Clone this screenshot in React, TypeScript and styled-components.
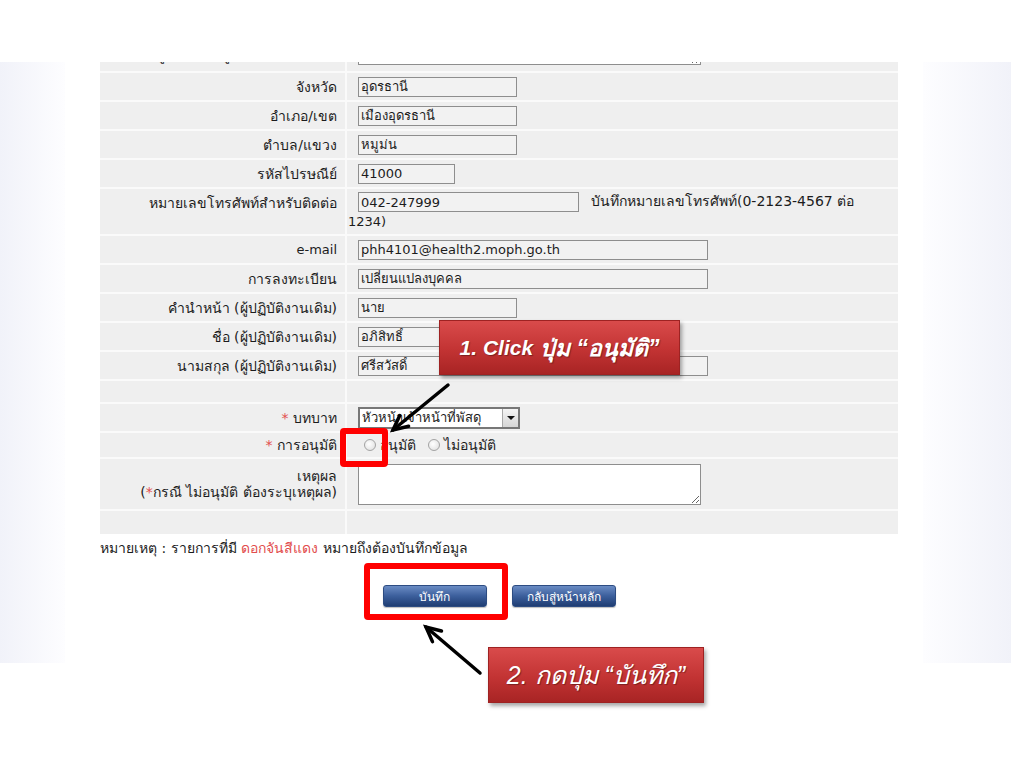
import React from "react";
import styled, { createGlobalStyle } from "styled-components";

const GlobalStyle = createGlobalStyle`
  html, body {
    margin: 0;
    padding: 0;
    background: #ffffff;
  }
  body {
    font-family: Tahoma, "DejaVu Sans", sans-serif;
  }
`;

const Page = styled.div`
  position: relative;
  width: 1024px;
  height: 768px;
  overflow: hidden;
  background: #ffffff;
`;

const Shot = styled.div`
  display: flex;
  margin-top: 62px;
  height: 601px;
`;

const Strip = styled.div<{ $side: "left" | "right" }>`
  width: ${(p) => (p.$side === "left" ? 65 : 88)}px;
  margin-left: ${(p) => (p.$side === "left" ? 0 : 25)}px;
  background: linear-gradient(
    to ${(p) => (p.$side === "left" ? "right" : "left")},
    #f1f2f9,
    #fdfdff
  );
`;

const Main = styled.div`
  width: 798px;
  margin-left: 35px;
  display: flex;
  flex-direction: column;
`;

const Table = styled.div`
  display: flex;
  flex-direction: column;
  gap: 2px;
  background: #fafafa;
`;

const Row = styled.div<{ $h: number }>`
  display: grid;
  grid-template-columns: 245px 1fr;
  column-gap: 2px;
  height: ${(p) => p.$h}px;
  overflow: hidden;
`;

const Label = styled.div<{ $top?: boolean; $latin?: boolean }>`
  background: #efefef;
  display: flex;
  flex-direction: column;
  justify-content: ${(p) => (p.$top ? "flex-start" : "center")};
  align-items: flex-end;
  padding: ${(p) => (p.$top ? "6px 8px 0 0" : "0 8px 0 0")};
  overflow: hidden;
  font-size: ${(p) => (p.$latin ? 13 : 14)}px;
  line-height: 16px;
  color: #1c1c1c;
  text-align: right;
  white-space: nowrap;
`;

const Value = styled.div<{ $flow?: boolean }>`
  background: #efefef;
  display: ${(p) => (p.$flow ? "block" : "flex")};
  align-items: center;
  padding: ${(p) => (p.$flow ? "3px 0 0 1px" : "0 0 0 1px")};
  overflow: hidden;
  font-size: 13px;
  line-height: 19px;
  color: #1c1c1c;
`;

const Cut = styled.div<{ $shift: number }>`
  margin-top: ${(p) => p.$shift}px;
`;

const Star = styled.span`
  color: #e24d4d;
`;

const Field = styled.input<{ $w: number }>`
  box-sizing: border-box;
  width: ${(p) => p.$w}px;
  height: 20px;
  margin: 0 0 0 10px;
  padding: 0 2px;
  border: 1px solid #8e8e8e;
  background: #f2f2f2;
  font-family: Tahoma, "DejaVu Sans", sans-serif;
  font-size: 13px;
  color: #1c1c1c;
  outline: none;
  vertical-align: top;
`;

const Hint = styled.span`
  margin-left: 12px;
  font-size: 14px;
  color: #1c1c1c;
`;

const Area = styled.textarea<{ $h: number }>`
  box-sizing: border-box;
  width: 343px;
  height: ${(p) => p.$h}px;
  margin: 0 0 0 10px;
  border: 1px solid #8e8e8e;
  background: #ffffff;
  outline: none;
  font-family: inherit;
`;

const SelectBox = styled.div`
  box-sizing: border-box;
  display: flex;
  align-items: center;
  width: 162px;
  height: 22px;
  margin-left: 10px;
  border: 2px solid #777777;
  background: #ffffff;
`;

const SelectText = styled.span`
  flex: 1;
  padding-left: 2px;
  font-size: 13px;
  color: #1c1c1c;
  white-space: nowrap;
  overflow: hidden;
`;

const DropButton = styled.span`
  box-sizing: border-box;
  width: 16px;
  height: 18px;
  border-left: 1px solid #a9a9a9;
  background: linear-gradient(#f4f4f4, #d6d6d6);
  display: flex;
  align-items: center;
  justify-content: center;
  &::after {
    content: "";
    border-left: 4px solid transparent;
    border-right: 4px solid transparent;
    border-top: 4px solid #111111;
  }
`;

const RadioGroup = styled.div`
  display: flex;
  align-items: center;
  margin-left: 16px;
  gap: 4px;
`;

const Radio = styled.span`
  box-sizing: border-box;
  width: 12px;
  height: 12px;
  border-radius: 50%;
  border: 1px solid #a3a3a3;
  background: radial-gradient(circle at 40% 40%, #ffffff, #dcdcdc);
`;

const RadioText = styled.span`
  margin-right: 8px;
  font-size: 14px;
  color: #1c1c1c;
`;

const Note = styled.div`
  margin-top: 6px;
  font-size: 14px;
  line-height: 16px;
  color: #1c1c1c;
`;

const Red = styled.span`
  color: #e24d4d;
`;

const Buttons = styled.div`
  display: flex;
  justify-content: center;
  gap: 25px;
  margin-top: 29px;
`;

const Button = styled.button`
  box-sizing: border-box;
  width: 104px;
  height: 22px;
  padding: 0;
  border: 1px solid #2d4c82;
  border-radius: 3px;
  background: linear-gradient(#6a8cc4, #3c5f9c 50%, #1f3d73);
  color: #ffffff;
  font-family: Tahoma, "DejaVu Sans", sans-serif;
  font-size: 12px;
  box-shadow: 0 1px 1px rgba(0, 0, 0, 0.25);
`;

const Frame = styled.div<{ $x: number; $y: number; $w: number; $h: number }>`
  position: absolute;
  left: ${(p) => p.$x}px;
  top: ${(p) => p.$y}px;
  width: ${(p) => p.$w}px;
  height: ${(p) => p.$h}px;
  box-sizing: border-box;
  border: 6px solid #ff0000;
  border-radius: 4px;
`;

const Callout = styled.div<{ $x: number; $y: number; $w: number; $h: number; $size: number; $bold?: boolean }>`
  position: absolute;
  left: ${(p) => p.$x}px;
  top: ${(p) => p.$y}px;
  width: ${(p) => p.$w}px;
  height: ${(p) => p.$h}px;
  box-sizing: border-box;
  display: flex;
  align-items: center;
  justify-content: center;
  border: 1px solid #9e2222;
  background: linear-gradient(#d94b4b, #c23333 55%, #a82424);
  box-shadow: 2px 3px 4px rgba(0, 0, 0, 0.35);
  color: #ffffff;
  font-family: "Liberation Sans", Arial, sans-serif;
  font-style: italic;
  font-weight: ${(p) => (p.$bold ? 700 : 400)};
  font-size: ${(p) => p.$size}px;
  text-shadow: 1px 1px 1px rgba(0, 0, 0, 0.35);
  white-space: nowrap;
`;

const Lead = styled.span`
  margin-right: 7px;
  font-size: 21px;
`;

const Arrows = styled.svg`
  position: absolute;
  left: 0;
  top: 0;
  pointer-events: none;
`;

type Arrow = { x1: number; y1: number; x2: number; y2: number };

const arrows: Arrow[] = [
  { x1: 448, y1: 385, x2: 393, y2: 430 },
  { x1: 480, y1: 673, x2: 426, y2: 627 },
];

function arrowHead(a: Arrow) {
  const ang = Math.atan2(a.y2 - a.y1, a.x2 - a.x1);
  const len = 16;
  const spread = 0.45;
  const p1 = [a.x2 - len * Math.cos(ang - spread), a.y2 - len * Math.sin(ang - spread)];
  const p2 = [a.x2 - len * Math.cos(ang + spread), a.y2 - len * Math.sin(ang + spread)];
  return `M${p1[0]} ${p1[1]} L${a.x2} ${a.y2} L${p2[0]} ${p2[1]}`;
}

export default function App() {
  return (
    <Page>
      <GlobalStyle />
      <Shot>
        <Strip $side="left" />
        <Main>
          <Table>
            <Row $h={9}>
              <Label $top>
                <Cut $shift={-21}>ที่อยู่ (เลขที่/หมู่/ตรอก/ซอย/ถนน)</Cut>
              </Label>
              <Value>
                <Cut $shift={-30}>
                  <Area $h={32} readOnly />
                </Cut>
              </Value>
            </Row>
            <Row $h={27}>
              <Label>จังหวัด</Label>
              <Value>
                <Field $w={159} readOnly value="อุดรธานี" />
              </Value>
            </Row>
            <Row $h={27}>
              <Label>อำเภอ/เขต</Label>
              <Value>
                <Field $w={159} readOnly value="เมืองอุดรธานี" />
              </Value>
            </Row>
            <Row $h={27}>
              <Label>ตำบล/แขวง</Label>
              <Value>
                <Field $w={159} readOnly value="หมูม่น" />
              </Value>
            </Row>
            <Row $h={27}>
              <Label>รหัสไปรษณีย์</Label>
              <Value>
                <Field $w={97} readOnly value="41000" />
              </Value>
            </Row>
            <Row $h={45}>
              <Label $top>หมายเลขโทรศัพท์สำหรับติดต่อ</Label>
              <Value $flow>
                <Field $w={221} readOnly value="042-247999" />
                <Hint>บันทึกหมายเลขโทรศัพท์(0-2123-4567 ต่อ</Hint>
                <br />
                1234)
              </Value>
            </Row>
            <Row $h={27}>
              <Label $latin>e-mail</Label>
              <Value>
                <Field $w={350} readOnly value="phh4101@health2.moph.go.th" />
              </Value>
            </Row>
            <Row $h={27}>
              <Label>การลงทะเบียน</Label>
              <Value>
                <Field $w={350} readOnly value="เปลี่ยนแปลงบุคคล" />
              </Value>
            </Row>
            <Row $h={27}>
              <Label>คำนำหน้า (ผู้ปฏิบัติงานเดิม)</Label>
              <Value>
                <Field $w={159} readOnly value="นาย" />
              </Value>
            </Row>
            <Row $h={27}>
              <Label>ชื่อ (ผู้ปฏิบัติงานเดิม)</Label>
              <Value>
                <Field $w={159} readOnly value="อภิสิทธิ์" />
              </Value>
            </Row>
            <Row $h={27}>
              <Label>นามสกุล (ผู้ปฏิบัติงานเดิม)</Label>
              <Value>
                <Field $w={350} readOnly value="ศรีสวัสดิ์" />
              </Value>
            </Row>
            <Row $h={21}>
              <Label />
              <Value />
            </Row>
            <Row $h={27}>
              <Label>
                <span>
                  <Star>*</Star> บทบาท
                </span>
              </Label>
              <Value>
                <SelectBox>
                  <SelectText>หัวหน้าเจ้าหน้าที่พัสดุ</SelectText>
                  <DropButton />
                </SelectBox>
              </Value>
            </Row>
            <Row $h={24}>
              <Label>
                <span>
                  <Star>*</Star> การอนุมัติ
                </span>
              </Label>
              <Value>
                <RadioGroup>
                  <Radio />
                  <RadioText>อนุมัติ</RadioText>
                  <Radio />
                  <RadioText>ไม่อนุมัติ</RadioText>
                </RadioGroup>
              </Value>
            </Row>
            <Row $h={50}>
              <Label>
                <span>เหตุผล</span>
                <span>
                  (<Star>*</Star>กรณี ไม่อนุมัติ ต้องระบุเหตุผล)
                </span>
              </Label>
              <Value>
                <Area $h={41} readOnly />
              </Value>
            </Row>
            <Row $h={23}>
              <Label />
              <Value />
            </Row>
          </Table>
          <Note>
            หมายเหตุ : รายการที่มี <Red>ดอกจันสีแดง</Red> หมายถึงต้องบันทึกข้อมูล
          </Note>
          <Buttons>
            <Button>บันทึก</Button>
            <Button>กลับสู่หน้าหลัก</Button>
          </Buttons>
        </Main>
        <Strip $side="right" />
      </Shot>

      <Frame $x={340} $y={428} $w={48} $h={39} />
      <Frame $x={364} $y={563} $w={144} $h={57} />

      <Callout $x={439} $y={320} $w={241} $h={55} $size={23} $bold>
        <Lead>1. Click</Lead>ปุ่ม “อนุมัติ”
      </Callout>
      <Callout $x={488} $y={647} $w={216} $h={56} $size={25}>
        2. กดปุ่ม “บันทึก”
      </Callout>

      <Arrows width={1024} height={768} viewBox="0 0 1024 768">
        {arrows.map((a, i) => (
          <g key={i} stroke="#000000" strokeWidth={3.5} fill="none" strokeLinecap="round" strokeLinejoin="miter">
            <line x1={a.x1} y1={a.y1} x2={a.x2} y2={a.y2} />
            <path d={arrowHead(a)} />
          </g>
        ))}
      </Arrows>
    </Page>
  );
}
